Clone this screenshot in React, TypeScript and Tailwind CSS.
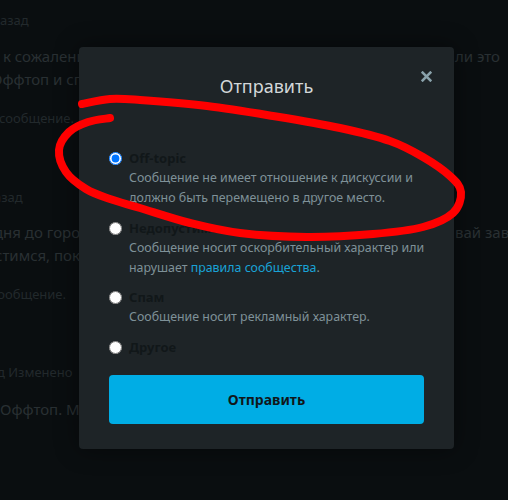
import { useState } from 'react';

type Reason = {
  id: string;
  title: string;
  text: React.ReactNode;
};

const REASONS: Reason[] = [
  {
    id: 'offtopic',
    title: 'Off-topic',
    text: 'Сообщение не имеет отношение к дискуссии и должно быть перемещено в другое место.',
  },
  {
    id: 'inappropriate',
    title: 'Недопустимо',
    text: (
      <>
        Сообщение носит оскорбительный характер или нарушает{' '}
        <a href="#" className="text-[#19a2d6]">
          правила сообщества
        </a>
        .
      </>
    ),
  },
  {
    id: 'spam',
    title: 'Спам',
    text: 'Сообщение носит рекламный характер.',
  },
  { id: 'other', title: 'Другое', text: null },
];

// points of the red marker stroke drawn over the screenshot
const SCRIBBLE: [number, number][] = [
  [82, 104], [110, 99], [140, 100], [207, 106], [273, 116], [340, 128],
  [390, 141], [423, 157], [450, 176], [461, 192], [453, 213], [423, 227],
  [373, 234], [307, 237], [240, 233], [190, 223], [140, 208], [110, 199],
  [86, 189], [66, 172], [59, 150], [69, 132], [88, 122], [110, 118],
];

function smoothPath(pts: [number, number][]) {
  let d = `M${pts[0][0]} ${pts[0][1]}`;
  for (let i = 0; i < pts.length - 1; i++) {
    const p0 = pts[i - 1] || pts[i];
    const p1 = pts[i];
    const p2 = pts[i + 1];
    const p3 = pts[i + 2] || p2;
    const c1x = p1[0] + (p2[0] - p0[0]) / 6;
    const c1y = p1[1] + (p2[1] - p0[1]) / 6;
    const c2x = p2[0] - (p3[0] - p1[0]) / 6;
    const c2y = p2[1] - (p3[1] - p1[1]) / 6;
    d += ` C${c1x} ${c1y} ${c2x} ${c2y} ${p2[0]} ${p2[1]}`;
  }
  return d;
}

// a line of the page behind the dialog: only the bits left and right of it show
function BgLine({ left, right, small, shift = 0 }: { left: string; right?: string; small?: boolean; shift?: number }) {
  return (
    <div
      className={
        small
          ? 'flex whitespace-nowrap text-[13px] leading-[20px] text-[#22292c]'
          : 'flex whitespace-nowrap text-[15px] leading-[23px] text-[#293033]'
      }
    >
      <span className="w-[79px] shrink-0 overflow-hidden">
        <span className="inline-block" style={{ marginLeft: shift }}>
          {left}
        </span>
      </span>
      <span className="w-[376px] shrink-0" />
      {right && <span className="shrink-0">{right}</span>}
    </div>
  );
}

export default function App() {
  const [reason, setReason] = useState('offtopic');

  return (
    <div
      className="relative h-[500px] w-[508px] overflow-hidden bg-[#0a0e10]"
      style={{ fontFamily: '"Noto Sans", "Open Sans", sans-serif' }}
    >
      {/* page behind the dialog */}
      <div className="flex flex-col">
        <div className="mt-[10px]">
          <BgLine small left="назад" shift={-8} />
        </div>
        <div className="mt-[15px]">
          <BgLine left="к сожалению, многие" right="ли это" shift={3} />
        </div>
        <BgLine left="Оффтоп и спам" shift={-9} />
        <div className="mt-[17px]">
          <BgLine small left="сообщение." shift={-1} />
        </div>
        <div className="mt-[59px]">
          <BgLine small left="назад" shift={-14} />
        </div>
        <div className="mt-[14px]">
          <BgLine left="дня до города" right="вай завтра" shift={-6} />
        </div>
        <BgLine left="стимся, покажем" shift={-5} />
        <div className="mt-[17px]">
          <BgLine small left="сообщение." shift={-9} />
        </div>
        <div className="mt-[58px]">
          <BgLine small left="д   Изменено" shift={-3} />
        </div>
        <div className="mt-[16px]">
          <BgLine left="Оффтоп. Модератор" />
        </div>
      </div>

      {/* dialog */}
      <div className="absolute left-[79px] top-[47px] flex h-[402px] w-[375px] flex-col rounded-[4px] bg-[#1e2427] px-[30px] pb-[25px] pt-[25px] shadow-[0_0_24px_rgba(0,0,0,0.45)]">
        <h2 className="h-[28px] text-center text-[18px] leading-[28px] text-[#d3d7d9]">Отправить</h2>
        <button className="absolute right-[22px] top-[24px] flex h-[11px] w-[11px] items-center justify-center text-[#8aa2ab]">
          <svg viewBox="0 0 10 10" width="11" height="11">
            <path d="M1.5 1.5 L8.5 8.5 M8.5 1.5 L1.5 8.5" stroke="currentColor" strokeWidth="2.4" strokeLinecap="square" />
          </svg>
        </button>

        <div className="mt-[48px] flex flex-col gap-[9.5px]">
          {REASONS.map((r) => (
            <label key={r.id} className="flex items-start gap-[7px]">
              <input
                type="radio"
                name="reason"
                checked={reason === r.id}
                onChange={() => setReason(r.id)}
                className="m-0 mt-[4px] h-[13px] w-[13px] shrink-0"
              />
              <div className="-mr-[10px] flex min-w-0 flex-1 flex-col">
                <span className="text-[13px] font-bold leading-[20px] text-[#111719]">{r.title}</span>
                {r.text && <p className="text-[12.4px] leading-[20px] text-[#7e9198]">{r.text}</p>}
              </div>
            </label>
          ))}
        </div>

        <button className="mt-auto h-[49px] w-full rounded-[4px] bg-[#00ade5] text-[14px] font-bold text-[#10171a]">
          Отправить
        </button>
      </div>

      {/* red marker annotation */}
      <svg className="pointer-events-none absolute inset-0" width="508" height="500" viewBox="0 0 508 500">
        <path
          d={smoothPath(SCRIBBLE)}
          fill="none"
          stroke="#ff0000"
          strokeWidth="8"
          strokeLinecap="round"
          strokeLinejoin="round"
        />
      </svg>
    </div>
  );
}
